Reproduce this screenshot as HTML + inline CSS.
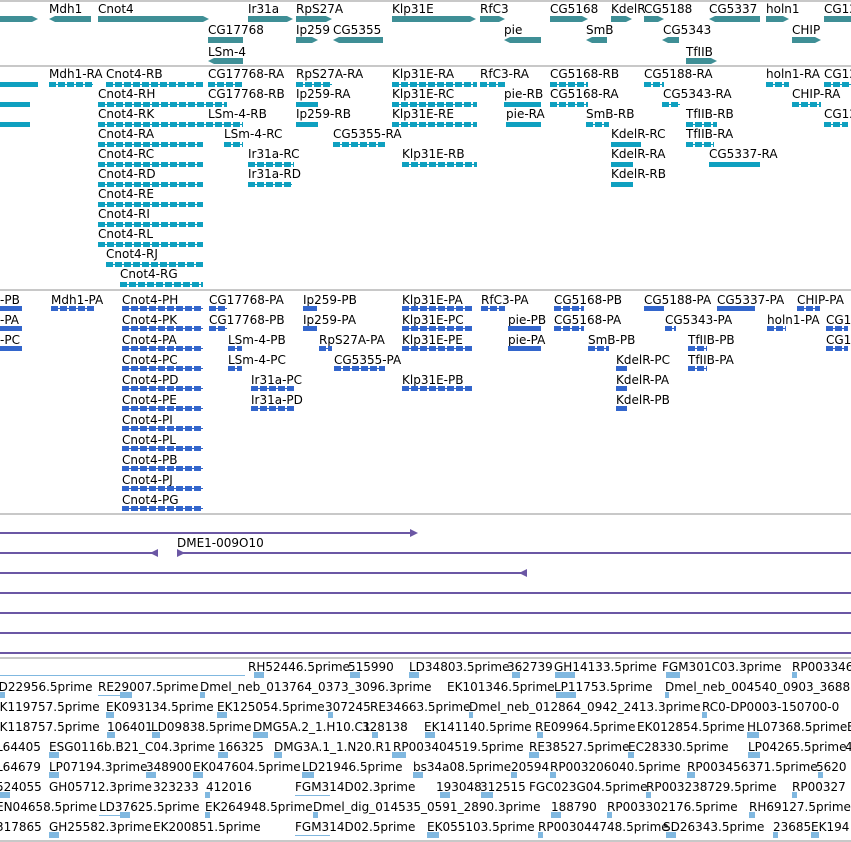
<!DOCTYPE html>
<html><head><meta charset="utf-8"><style>
*{margin:0;padding:0}
body{width:851px;height:842px;position:relative;overflow:hidden;background:#fff;font-family:"DejaVu Sans","Liberation Sans",sans-serif;font-size:12px;line-height:14px;color:#000}
.t{position:absolute;white-space:nowrap}
.hr{position:absolute;left:0;width:851px;height:2px;background:#c8c8c8}
.b{position:absolute;height:6px;background:#3f8f96}
.r{clip-path:polygon(0 0,calc(100% - 6px) 0,100% 50%,calc(100% - 6px) 100%,0 100%)}
.l{clip-path:polygon(6px 0,100% 0,100% 100%,6px 100%,0 50%)}
.g{position:absolute;height:7px;background:linear-gradient(#0fa0c0,#0fa0c0) 0 3px/100% 1px no-repeat,repeating-linear-gradient(90deg,#0fa0c0 0 7px,transparent 7px 9px) 0 1px/100% 5px no-repeat}
.gb{position:absolute;height:5px;background:#0fa0c0}
.p{position:absolute;height:7px;background:linear-gradient(#3366cc,#3366cc) 0 3px/100% 1px no-repeat,repeating-linear-gradient(90deg,#3366cc 0 7px,transparent 7px 9px) 0 1px/100% 5px no-repeat}
.pb{position:absolute;height:5px;background:#3366cc}
.pl{position:absolute;left:0;height:2px;background:#6b57a4}
.pa{position:absolute;width:8px;height:8px;background:#6b57a4}
.q{position:absolute;height:6px;background:#80b8e0}
.ql{position:absolute;height:1px;background:#80b8e0}
</style></head><body>
<div class="hr" style="top:0"></div>
<div class="hr" style="top:65px"></div>
<div class="hr" style="top:289px"></div>
<div class="hr" style="top:513px"></div>
<div class="hr" style="top:657px"></div>
<div class="hr" style="top:840px"></div>

<div class="t" style="left:49px;top:2px">Mdh1</div>
<div class="t" style="left:98px;top:2px">Cnot4</div>
<div class="t" style="left:248px;top:2px">Ir31a</div>
<div class="t" style="left:296px;top:2px">RpS27A</div>
<div class="t" style="left:392px;top:2px">Klp31E</div>
<div class="t" style="left:480px;top:2px">RfC3</div>
<div class="t" style="left:550px;top:2px">CG5168</div>
<div class="t" style="left:611px;top:2px">KdelR</div>
<div class="t" style="left:644px;top:2px">CG5188</div>
<div class="t" style="left:709px;top:2px">CG5337</div>
<div class="t" style="left:766px;top:2px">holn1</div>
<div class="t" style="left:824px;top:2px">CG12</div>
<div class="b r" style="left:0;top:16px;width:38px"></div>
<div class="b l" style="left:49px;top:16px;width:42px"></div>
<div class="b r" style="left:98px;top:16px;width:111px"></div>
<div class="b r" style="left:248px;top:16px;width:45px"></div>
<div class="b r" style="left:296px;top:16px;width:36px"></div>
<div class="b r" style="left:392px;top:16px;width:84px"></div>
<div class="b r" style="left:480px;top:16px;width:25px"></div>
<div class="b r" style="left:550px;top:16px;width:38px"></div>
<div class="b r" style="left:611px;top:16px;width:21px"></div>
<div class="b r" style="left:644px;top:16px;width:20px"></div>
<div class="b l" style="left:709px;top:16px;width:51px"></div>
<div class="b r" style="left:766px;top:16px;width:23px"></div>
<div class="b" style="left:824px;top:16px;width:27px"></div>
<div class="t" style="left:208px;top:23px">CG17768</div>
<div class="t" style="left:296px;top:23px">Ip259</div>
<div class="t" style="left:333px;top:23px">CG5355</div>
<div class="t" style="left:504px;top:23px">pie</div>
<div class="t" style="left:586px;top:23px">SmB</div>
<div class="t" style="left:663px;top:23px">CG5343</div>
<div class="t" style="left:792px;top:23px">CHIP</div>
<div class="b" style="left:208px;top:37px;width:35px"></div>
<div class="b r" style="left:296px;top:37px;width:22px"></div>
<div class="b l" style="left:333px;top:37px;width:50px"></div>
<div class="b l" style="left:504px;top:37px;width:37px"></div>
<div class="b l" style="left:586px;top:37px;width:21px"></div>
<div class="b l" style="left:662px;top:37px;width:17px"></div>
<div class="b r" style="left:792px;top:37px;width:29px"></div>
<div class="t" style="left:208px;top:45px">LSm-4</div>
<div class="t" style="left:686px;top:45px">TfIIB</div>
<div class="b l" style="left:208px;top:58px;width:35px"></div>
<div class="b r" style="left:686px;top:58px;width:31px"></div>

<div class="gb" style="left:0;top:82px;width:38px"></div>
<div class="t" style="left:49px;top:67px">Mdh1-RA</div><div class="g" style="left:49px;top:81px;width:44px"></div>
<div class="t" style="left:106px;top:67px">Cnot4-RB</div><div class="g" style="left:106px;top:81px;width:97px"></div>
<div class="t" style="left:208px;top:67px">CG17768-RA</div><div class="g" style="left:208px;top:81px;width:34px"></div>
<div class="t" style="left:296px;top:67px">RpS27A-RA</div><div class="g" style="left:296px;top:81px;width:36px"></div>
<div class="t" style="left:392px;top:67px">Klp31E-RA</div><div class="g" style="left:392px;top:81px;width:85px"></div>
<div class="t" style="left:480px;top:67px">RfC3-RA</div><div class="g" style="left:480px;top:81px;width:25px"></div>
<div class="t" style="left:550px;top:67px">CG5168-RB</div><div class="g" style="left:550px;top:81px;width:38px"></div>
<div class="t" style="left:644px;top:67px">CG5188-RA</div><div class="g" style="left:644px;top:81px;width:20px"></div>
<div class="t" style="left:766px;top:67px">holn1-RA</div><div class="g" style="left:766px;top:81px;width:23px"></div>
<div class="t" style="left:824px;top:67px">CG12</div><div class="g" style="left:824px;top:81px;width:27px"></div>

<div class="gb" style="left:0;top:102px;width:30px"></div>
<div class="t" style="left:98px;top:87px">Cnot4-RH</div><div class="g" style="left:98px;top:101px;width:129px"></div>
<div class="t" style="left:208px;top:87px">CG17768-RB</div>
<div class="t" style="left:296px;top:87px">Ip259-RA</div><div class="gb" style="left:296px;top:102px;width:22px"></div>
<div class="t" style="left:392px;top:87px">Klp31E-RC</div><div class="g" style="left:392px;top:101px;width:85px"></div>
<div class="t" style="left:504px;top:87px">pie-RB</div><div class="gb" style="left:504px;top:102px;width:37px"></div>
<div class="t" style="left:550px;top:87px">CG5168-RA</div><div class="g" style="left:550px;top:101px;width:38px"></div>
<div class="t" style="left:663px;top:87px">CG5343-RA</div><div class="g" style="left:662px;top:101px;width:18px"></div>
<div class="t" style="left:792px;top:87px">CHIP-RA</div><div class="g" style="left:792px;top:101px;width:29px"></div>

<div class="gb" style="left:0;top:122px;width:30px"></div>
<div class="t" style="left:98px;top:107px">Cnot4-RK</div><div class="g" style="left:98px;top:121px;width:145px"></div>
<div class="t" style="left:208px;top:107px">LSm-4-RB</div>
<div class="t" style="left:296px;top:107px">Ip259-RB</div><div class="gb" style="left:296px;top:122px;width:22px"></div>
<div class="t" style="left:392px;top:107px">Klp31E-RE</div><div class="g" style="left:392px;top:121px;width:85px"></div>
<div class="t" style="left:506px;top:107px">pie-RA</div><div class="gb" style="left:506px;top:122px;width:35px"></div>
<div class="t" style="left:586px;top:107px">SmB-RB</div><div class="g" style="left:586px;top:121px;width:23px"></div>
<div class="t" style="left:686px;top:107px">TfIIB-RB</div><div class="g" style="left:686px;top:121px;width:31px"></div>
<div class="t" style="left:824px;top:107px">CG12</div><div class="g" style="left:824px;top:121px;width:24px"></div>

<div class="t" style="left:98px;top:127px">Cnot4-RA</div><div class="g" style="left:98px;top:141px;width:105px"></div>
<div class="t" style="left:224px;top:127px">LSm-4-RC</div><div class="g" style="left:224px;top:141px;width:19px"></div>
<div class="t" style="left:333px;top:127px">CG5355-RA</div><div class="g" style="left:333px;top:141px;width:52px"></div>
<div class="t" style="left:611px;top:127px">KdelR-RC</div><div class="gb" style="left:611px;top:142px;width:30px"></div>
<div class="t" style="left:686px;top:127px">TfIIB-RA</div><div class="g" style="left:686px;top:141px;width:28px"></div>

<div class="t" style="left:98px;top:147px">Cnot4-RC</div><div class="g" style="left:98px;top:161px;width:105px"></div>
<div class="t" style="left:248px;top:147px">Ir31a-RC</div><div class="g" style="left:248px;top:161px;width:46px"></div>
<div class="t" style="left:402px;top:147px">Klp31E-RB</div><div class="g" style="left:402px;top:161px;width:75px"></div>
<div class="t" style="left:611px;top:147px">KdelR-RA</div><div class="gb" style="left:611px;top:162px;width:22px"></div>
<div class="t" style="left:709px;top:147px">CG5337-RA</div><div class="gb" style="left:709px;top:162px;width:51px"></div>

<div class="t" style="left:98px;top:167px">Cnot4-RD</div><div class="g" style="left:98px;top:181px;width:105px"></div>
<div class="t" style="left:248px;top:167px">Ir31a-RD</div><div class="g" style="left:248px;top:181px;width:44px"></div>
<div class="t" style="left:611px;top:167px">KdelR-RB</div><div class="gb" style="left:611px;top:182px;width:22px"></div>
<div class="t" style="left:98px;top:187px">Cnot4-RE</div><div class="g" style="left:98px;top:201px;width:105px"></div>
<div class="t" style="left:98px;top:207px">Cnot4-RI</div><div class="g" style="left:98px;top:221px;width:105px"></div>
<div class="t" style="left:98px;top:227px">Cnot4-RL</div><div class="g" style="left:98px;top:241px;width:105px"></div>
<div class="t" style="left:106px;top:247px">Cnot4-RJ</div><div class="g" style="left:106px;top:261px;width:97px"></div>
<div class="t" style="left:120px;top:267px">Cnot4-RG</div><div class="g" style="left:120px;top:281px;width:83px"></div>

<div class="t" style="left:0;top:293px">-PB</div><div class="pb" style="left:0;top:306px;width:22px"></div>
<div class="t" style="left:51px;top:293px">Mdh1-PA</div><div class="p" style="left:51px;top:305px;width:43px"></div>
<div class="t" style="left:122px;top:293px">Cnot4-PH</div><div class="p" style="left:122px;top:305px;width:81px"></div>
<div class="t" style="left:209px;top:293px">CG17768-PA</div><div class="p" style="left:209px;top:305px;width:18px"></div>
<div class="t" style="left:303px;top:293px">Ip259-PB</div><div class="pb" style="left:303px;top:306px;width:14px"></div>
<div class="t" style="left:402px;top:293px">Klp31E-PA</div><div class="p" style="left:402px;top:305px;width:70px"></div>
<div class="t" style="left:481px;top:293px">RfC3-PA</div><div class="p" style="left:481px;top:305px;width:24px"></div>
<div class="t" style="left:554px;top:293px">CG5168-PB</div><div class="p" style="left:554px;top:305px;width:30px"></div>
<div class="t" style="left:644px;top:293px">CG5188-PA</div><div class="pb" style="left:644px;top:306px;width:20px"></div>
<div class="t" style="left:717px;top:293px">CG5337-PA</div><div class="pb" style="left:717px;top:306px;width:38px"></div>
<div class="t" style="left:797px;top:293px">CHIP-PA</div><div class="p" style="left:797px;top:305px;width:23px"></div>

<div class="t" style="left:0;top:313px">-PA</div><div class="pb" style="left:0;top:326px;width:22px"></div>
<div class="t" style="left:122px;top:313px">Cnot4-PK</div><div class="p" style="left:122px;top:325px;width:81px"></div>
<div class="t" style="left:209px;top:313px">CG17768-PB</div><div class="p" style="left:209px;top:325px;width:18px"></div>
<div class="t" style="left:303px;top:313px">Ip259-PA</div><div class="pb" style="left:303px;top:326px;width:14px"></div>
<div class="t" style="left:402px;top:313px">Klp31E-PC</div><div class="p" style="left:402px;top:325px;width:70px"></div>
<div class="t" style="left:508px;top:313px">pie-PB</div><div class="pb" style="left:508px;top:326px;width:33px"></div>
<div class="t" style="left:554px;top:313px">CG5168-PA</div><div class="p" style="left:554px;top:325px;width:30px"></div>
<div class="t" style="left:665px;top:313px">CG5343-PA</div><div class="p" style="left:665px;top:325px;width:11px"></div>
<div class="t" style="left:767px;top:313px">holn1-PA</div><div class="p" style="left:767px;top:325px;width:19px"></div>
<div class="t" style="left:826px;top:313px">CG12</div><div class="p" style="left:826px;top:325px;width:22px"></div>

<div class="t" style="left:0;top:333px">-PC</div><div class="pb" style="left:0;top:346px;width:22px"></div>
<div class="t" style="left:122px;top:333px">Cnot4-PA</div><div class="p" style="left:122px;top:345px;width:81px"></div>
<div class="t" style="left:228px;top:333px">LSm-4-PB</div><div class="p" style="left:228px;top:345px;width:14px"></div>
<div class="t" style="left:319px;top:333px">RpS27A-PA</div><div class="p" style="left:319px;top:345px;width:13px"></div>
<div class="t" style="left:402px;top:333px">Klp31E-PE</div><div class="p" style="left:402px;top:345px;width:70px"></div>
<div class="t" style="left:508px;top:333px">pie-PA</div><div class="pb" style="left:508px;top:346px;width:33px"></div>
<div class="t" style="left:588px;top:333px">SmB-PB</div><div class="p" style="left:588px;top:345px;width:21px"></div>
<div class="t" style="left:688px;top:333px">TfIIB-PB</div><div class="p" style="left:688px;top:345px;width:19px"></div>
<div class="t" style="left:826px;top:333px">CG12</div><div class="p" style="left:826px;top:345px;width:22px"></div>

<div class="t" style="left:122px;top:353px">Cnot4-PC</div><div class="p" style="left:122px;top:365px;width:81px"></div>
<div class="t" style="left:228px;top:353px">LSm-4-PC</div><div class="p" style="left:228px;top:365px;width:14px"></div>
<div class="t" style="left:334px;top:353px">CG5355-PA</div><div class="p" style="left:334px;top:365px;width:51px"></div>
<div class="t" style="left:616px;top:353px">KdelR-PC</div><div class="pb" style="left:616px;top:366px;width:11px"></div>
<div class="t" style="left:688px;top:353px">TfIIB-PA</div><div class="p" style="left:688px;top:365px;width:19px"></div>

<div class="t" style="left:122px;top:373px">Cnot4-PD</div><div class="p" style="left:122px;top:385px;width:81px"></div>
<div class="t" style="left:251px;top:373px">Ir31a-PC</div><div class="p" style="left:251px;top:385px;width:43px"></div>
<div class="t" style="left:402px;top:373px">Klp31E-PB</div><div class="p" style="left:402px;top:385px;width:70px"></div>
<div class="t" style="left:616px;top:373px">KdelR-PA</div><div class="pb" style="left:616px;top:386px;width:11px"></div>
<div class="t" style="left:122px;top:393px">Cnot4-PE</div><div class="p" style="left:122px;top:405px;width:81px"></div>
<div class="t" style="left:251px;top:393px">Ir31a-PD</div><div class="p" style="left:251px;top:405px;width:43px"></div>
<div class="t" style="left:616px;top:393px">KdelR-PB</div><div class="pb" style="left:616px;top:406px;width:11px"></div>
<div class="t" style="left:122px;top:413px">Cnot4-PI</div><div class="p" style="left:122px;top:425px;width:81px"></div>
<div class="t" style="left:122px;top:433px">Cnot4-PL</div><div class="p" style="left:122px;top:445px;width:81px"></div>
<div class="t" style="left:122px;top:453px">Cnot4-PB</div><div class="p" style="left:122px;top:465px;width:81px"></div>
<div class="t" style="left:122px;top:473px">Cnot4-PJ</div><div class="p" style="left:122px;top:485px;width:81px"></div>
<div class="t" style="left:122px;top:493px">Cnot4-PG</div><div class="p" style="left:122px;top:505px;width:81px"></div>

<div class="pl" style="top:532px;width:414px"></div><div class="pa" style="left:410px;top:529px;clip-path:polygon(0 0,100% 50%,0 100%)"></div>
<div class="pl" style="top:552px;width:155px"></div><div class="pa" style="left:150px;top:549px;clip-path:polygon(100% 0,100% 100%,0 50%)"></div>
<div class="pl" style="top:552px;left:177px;width:674px"></div><div class="pa" style="left:177px;top:549px;clip-path:polygon(0 0,100% 50%,0 100%)"></div>
<div class="t" style="left:177px;top:536px">DME1-009O10</div>
<div class="pl" style="top:572px;width:524px"></div><div class="pa" style="left:519px;top:569px;clip-path:polygon(100% 0,100% 100%,0 50%)"></div>
<div class="pl" style="top:592px;width:851px"></div>
<div class="pl" style="top:612px;width:851px"></div>
<div class="pl" style="top:632px;width:851px"></div>
<div class="pl" style="top:652px;width:851px"></div>

<div class="t" style="left:248px;top:660px">RH52446.5prime</div>
<div class="t" style="left:348px;top:660px">515990</div>
<div class="t" style="left:409px;top:660px">LD34803.5prime</div>
<div class="t" style="left:507px;top:660px">362739</div>
<div class="t" style="left:554px;top:660px">GH14133.5prime</div>
<div class="t" style="left:662px;top:660px">FGM301C03.3prime</div>
<div class="t" style="left:792px;top:660px">RP003346</div>
<div class="q" style="left:254px;top:672px;width:10px"></div><div class="q" style="left:350px;top:672px;width:10px"></div><div class="q" style="left:409px;top:672px;width:10px"></div><div class="q" style="left:512px;top:672px;width:8px"></div><div class="q" style="left:555px;top:672px;width:20px"></div><div class="q" style="left:666px;top:672px;width:14px"></div><div class="q" style="left:792px;top:672px;width:5px"></div>

<div class="t" style="left:-8px;top:680px">LD22956.5prime</div>
<div class="t" style="left:98px;top:680px">RE29007.5prime</div>
<div class="t" style="left:200px;top:680px">Dmel_neb_013764_0373_3096.3prime</div>
<div class="t" style="left:447px;top:680px">EK101346.5prime</div>
<div class="t" style="left:554px;top:680px">LP11753.5prime</div>
<div class="t" style="left:665px;top:680px">Dmel_neb_004540_0903_3688</div>
<div class="ql" style="left:0;top:675px;width:245px"></div>
<div class="q" style="left:0;top:692px;width:5px"></div><div class="ql" style="left:98px;top:695px;width:30px"></div><div class="q" style="left:120px;top:692px;width:12px"></div><div class="q" style="left:200px;top:692px;width:5px"></div><div class="q" style="left:556px;top:692px;width:20px"></div><div class="q" style="left:665px;top:692px;width:4px"></div>

<div class="t" style="left:-8px;top:700px">EK119757.5prime</div>
<div class="t" style="left:106px;top:700px">EK093134.5prime</div>
<div class="t" style="left:217px;top:700px">EK125054.5prime</div>
<div class="t" style="left:325px;top:700px">307245</div>
<div class="t" style="left:370px;top:700px">RE34663.5prime</div>
<div class="t" style="left:469px;top:700px">Dmel_neb_012864_0942_2413.3prime</div>
<div class="t" style="left:702px;top:700px">RC0-DP0003-150700-0</div>
<div class="q" style="left:106px;top:712px;width:8px"></div><div class="q" style="left:217px;top:712px;width:10px"></div><div class="q" style="left:328px;top:712px;width:5px"></div><div class="q" style="left:469px;top:712px;width:4px"></div><div class="q" style="left:702px;top:712px;width:5px"></div>

<div class="t" style="left:-8px;top:720px">EK118757.5prime</div>
<div class="t" style="left:107px;top:720px">106401</div>
<div class="t" style="left:151px;top:720px">LD09838.5prime</div>
<div class="t" style="left:253px;top:720px">DMG5A.2_1.H10.C1</div>
<div class="t" style="left:362px;top:720px">328138</div>
<div class="t" style="left:424px;top:720px">EK141140.5prime</div>
<div class="t" style="left:535px;top:720px">RE09964.5prime</div>
<div class="t" style="left:637px;top:720px">EK012854.5prime</div>
<div class="t" style="left:747px;top:720px">HL07368.5prime</div>
<div class="t" style="left:847px;top:720px">E</div>
<div class="q" style="left:107px;top:732px;width:8px"></div><div class="q" style="left:152px;top:732px;width:8px"></div><div class="q" style="left:253px;top:732px;width:15px"></div><div class="q" style="left:372px;top:732px;width:6px"></div><div class="q" style="left:425px;top:732px;width:10px"></div><div class="q" style="left:537px;top:732px;width:6px"></div><div class="q" style="left:747px;top:732px;width:12px"></div>

<div class="t" style="left:-4px;top:740px">L64405</div>
<div class="t" style="left:49px;top:740px">ESG0116b.B21_C04.3prime</div>
<div class="t" style="left:218px;top:740px">166325</div>
<div class="t" style="left:274px;top:740px">DMG3A.1_1.N20.R1</div>
<div class="t" style="left:393px;top:740px">RP003404519.5prime</div>
<div class="t" style="left:529px;top:740px">RE38527.5prime</div>
<div class="t" style="left:628px;top:740px">EC28330.5prime</div>
<div class="t" style="left:748px;top:740px">LP04265.5prime</div>
<div class="t" style="left:845px;top:740px">4</div>
<div class="q" style="left:49px;top:752px;width:10px"></div><div class="q" style="left:218px;top:752px;width:10px"></div><div class="q" style="left:274px;top:752px;width:8px"></div><div class="q" style="left:392px;top:752px;width:14px"></div><div class="q" style="left:529px;top:752px;width:10px"></div><div class="q" style="left:628px;top:752px;width:6px"></div><div class="q" style="left:748px;top:752px;width:12px"></div>

<div class="t" style="left:-4px;top:760px">L64679</div>
<div class="t" style="left:49px;top:760px">LP07194.3prime</div>
<div class="t" style="left:146px;top:760px">348900</div>
<div class="t" style="left:193px;top:760px">EK047604.5prime</div>
<div class="t" style="left:302px;top:760px">LD21946.5prime</div>
<div class="t" style="left:413px;top:760px">bs34a08.5prime</div>
<div class="t" style="left:511px;top:760px">20594</div>
<div class="t" style="left:550px;top:760px">RP003206040.5prime</div>
<div class="t" style="left:687px;top:760px">RP003456371.5prime</div>
<div class="t" style="left:816px;top:760px">5620</div>
<div class="q" style="left:49px;top:772px;width:10px"></div><div class="q" style="left:146px;top:772px;width:10px"></div><div class="q" style="left:193px;top:772px;width:10px"></div><div class="q" style="left:302px;top:772px;width:12px"></div><div class="q" style="left:413px;top:772px;width:10px"></div><div class="q" style="left:511px;top:772px;width:6px"></div><div class="q" style="left:550px;top:772px;width:6px"></div><div class="q" style="left:687px;top:772px;width:8px"></div><div class="q" style="left:818px;top:772px;width:5px"></div>

<div class="t" style="left:-4px;top:780px">524055</div>
<div class="t" style="left:49px;top:780px">GH05712.3prime</div>
<div class="t" style="left:153px;top:780px">323233</div>
<div class="t" style="left:206px;top:780px">412016</div>
<div class="t" style="left:295px;top:780px">FGM314D02.3prime</div>
<div class="t" style="left:436px;top:780px">193048</div>
<div class="t" style="left:480px;top:780px">312515</div>
<div class="t" style="left:529px;top:780px">FGC023G04.5prime</div>
<div class="t" style="left:646px;top:780px">RP003238729.5prime</div>
<div class="t" style="left:792px;top:780px">RP00327</div>
<div class="ql" style="left:295px;top:795px;width:35px"></div><div class="q" style="left:0;top:792px;width:10px"></div><div class="q" style="left:205px;top:792px;width:5px"></div><div class="q" style="left:440px;top:792px;width:10px"></div><div class="q" style="left:481px;top:792px;width:12px"></div><div class="q" style="left:646px;top:792px;width:5px"></div><div class="q" style="left:792px;top:792px;width:5px"></div>

<div class="t" style="left:-4px;top:800px">EN04658.5prime</div>
<div class="t" style="left:99px;top:800px">LD37625.5prime</div>
<div class="t" style="left:205px;top:800px">EK264948.5prime</div>
<div class="t" style="left:313px;top:800px">Dmel_dig_014535_0591_2890.3prime</div>
<div class="t" style="left:551px;top:800px">188790</div>
<div class="t" style="left:607px;top:800px">RP003302176.5prime</div>
<div class="t" style="left:749px;top:800px">RH69127.5prime</div>
<div class="ql" style="left:99px;top:815px;width:30px"></div><div class="q" style="left:120px;top:812px;width:10px"></div><div class="q" style="left:205px;top:812px;width:5px"></div><div class="q" style="left:313px;top:812px;width:5px"></div><div class="q" style="left:551px;top:812px;width:10px"></div><div class="q" style="left:607px;top:812px;width:5px"></div><div class="q" style="left:749px;top:812px;width:6px"></div>

<div class="t" style="left:-4px;top:820px">317865</div>
<div class="t" style="left:49px;top:820px">GH25582.3prime</div>
<div class="t" style="left:153px;top:820px">EK200851.5prime</div>
<div class="t" style="left:295px;top:820px">FGM314D02.5prime</div>
<div class="t" style="left:427px;top:820px">EK055103.5prime</div>
<div class="t" style="left:538px;top:820px">RP003044748.5prime</div>
<div class="t" style="left:663px;top:820px">SD26343.5prime</div>
<div class="t" style="left:773px;top:820px">23685</div>
<div class="t" style="left:811px;top:820px">EK194</div>
<div class="q" style="left:49px;top:832px;width:10px"></div><div class="ql" style="left:295px;top:835px;width:35px"></div><div class="q" style="left:427px;top:832px;width:12px"></div><div class="q" style="left:538px;top:832px;width:5px"></div><div class="q" style="left:666px;top:832px;width:10px"></div><div class="q" style="left:773px;top:832px;width:5px"></div><div class="q" style="left:811px;top:832px;width:8px"></div>
</body></html>
